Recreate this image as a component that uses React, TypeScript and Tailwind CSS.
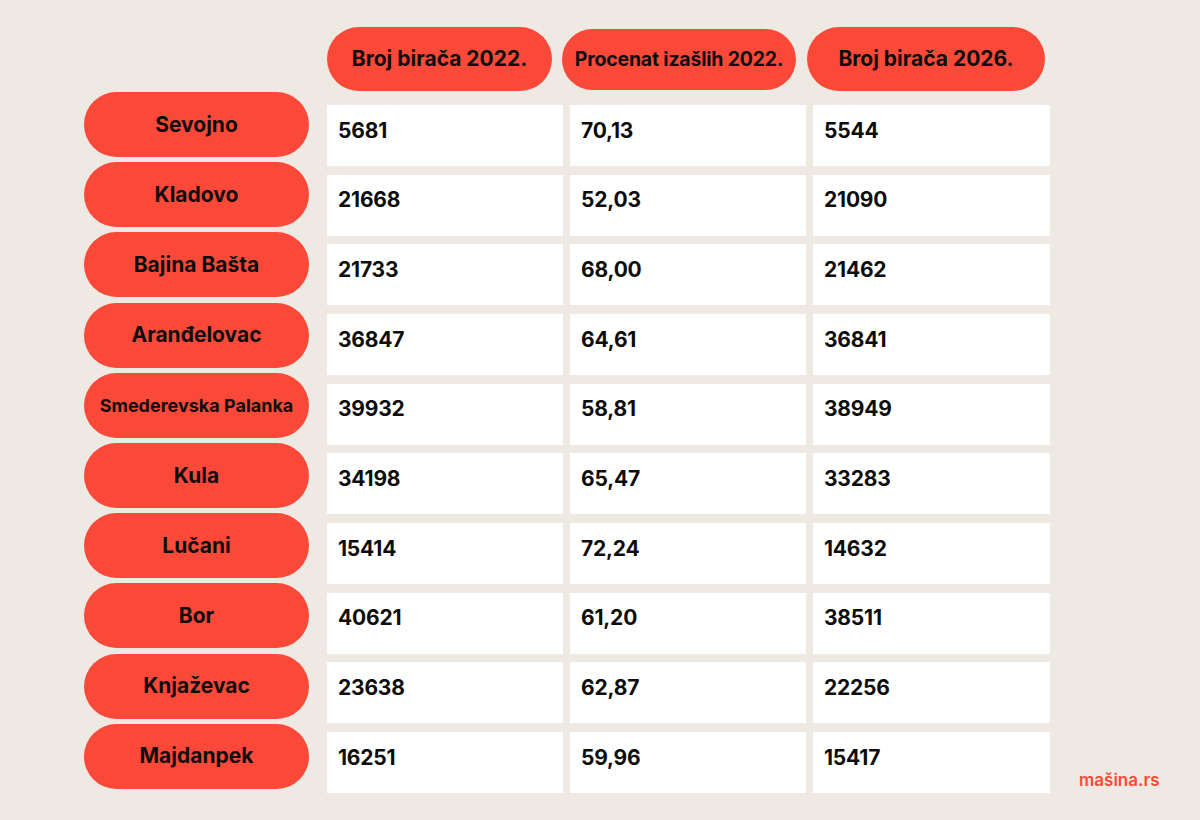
import { Fragment } from "react";

const rows = [
  { name: "Sevojno", a: "5681", b: "70,13", c: "5544" },
  { name: "Kladovo", a: "21668", b: "52,03", c: "21090" },
  { name: "Bajina Bašta", a: "21733", b: "68,00", c: "21462" },
  { name: "Aranđelovac", a: "36847", b: "64,61", c: "36841" },
  { name: "Smederevska Palanka", a: "39932", b: "58,81", c: "38949", small: true },
  { name: "Kula", a: "34198", b: "65,47", c: "33283" },
  { name: "Lučani", a: "15414", b: "72,24", c: "14632" },
  { name: "Bor", a: "40621", b: "61,20", c: "38511" },
  { name: "Knjaževac", a: "23638", b: "62,87", c: "22256" },
  { name: "Majdanpek", a: "16251", b: "59,96", c: "15417" },
];

const Cell = ({ value }: { value: string }) => (
  <div className="h-[61px] bg-white flex items-center pl-[11px] pb-[10px] text-[21px] font-bold text-[#0d0d0d] tracking-[-0.2px]">
    {value}
  </div>
);

export default function App() {
  return (
    <div className="w-[1200px] h-[820px] bg-[#eeeae3] flex items-start font-['Inter','Noto_Sans',sans-serif] overflow-hidden">
      {/* municipality pills */}
      <div className="ml-[84px] mt-[92px] w-[225px] flex flex-col gap-[5.2px]">
        {rows.map((r) => (
          <div
            key={r.name}
            className={
              r.small
                ? "h-[65px] rounded-full bg-[#fb4939] flex items-center justify-center text-[18px] font-bold text-[#0d0d0d]"
                : "h-[65px] rounded-full bg-[#fb4939] flex items-center justify-center text-[21px] font-bold text-[#0d0d0d]"
            }
          >
            {r.name}
          </div>
        ))}
      </div>

      <div className="ml-[18px] mt-[27px] flex flex-col">
        {/* headers */}
        <div className="flex items-start h-[64px]">
          <div className="w-[225px] h-[64px] rounded-full bg-[#fb4939] flex items-center justify-center text-[21px] font-bold text-[#0d0d0d]">
            Broj birača 2022.
          </div>
          <div className="ml-[10px] mt-[2px] w-[234px] h-[61px] rounded-full bg-[#fb4939] flex items-center justify-center text-[19.5px] font-bold text-[#0d0d0d] tracking-[-0.2px]">
            Procenat izašlih 2022.
          </div>
          <div className="ml-[11px] w-[238px] h-[64px] rounded-full bg-[#fb4939] flex items-center justify-center text-[21px] font-bold text-[#0d0d0d]">
            Broj birača 2026.
          </div>
        </div>

        {/* values */}
        <div className="mt-[14px] grid grid-cols-[236px_236px_237px] gap-x-[7px] gap-y-[8.67px]">
          {rows.map((r) => (
            <Fragment key={r.name}>
              <Cell value={r.a} />
              <Cell value={r.b} />
              <Cell value={r.c} />
            </Fragment>
          ))}
        </div>
      </div>

      <div className="self-end mb-[30px] ml-[29px] text-[17px] leading-[20px] font-semibold text-[#fb4939]">
        mašina.rs
      </div>
    </div>
  );
}
